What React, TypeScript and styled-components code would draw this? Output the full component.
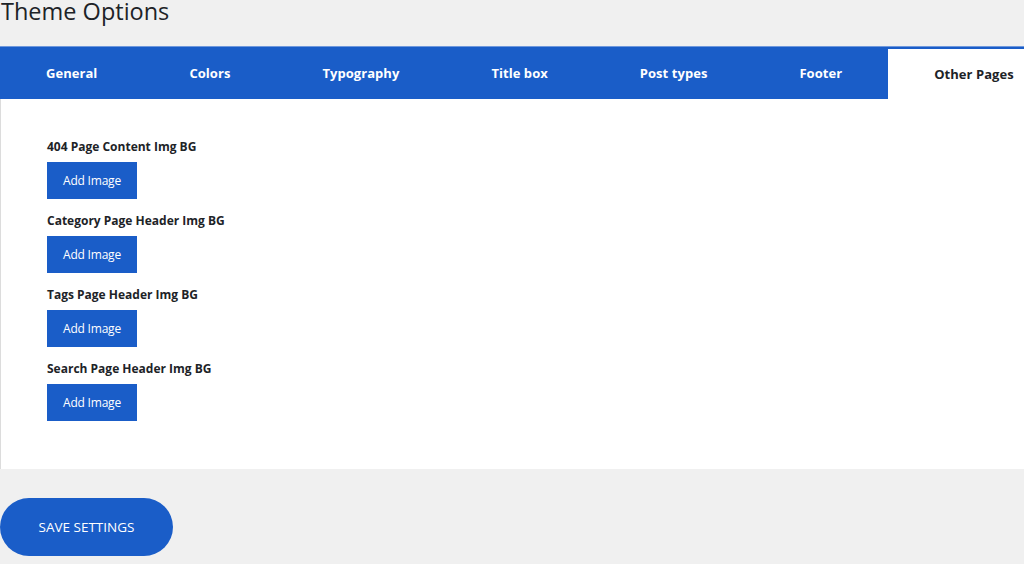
import styled, { createGlobalStyle } from 'styled-components';

const tabs = ['General', 'Colors', 'Typography', 'Title box', 'Post types', 'Footer', 'Other Pages'];
const fields = [
  '404 Page Content Img BG',
  'Category Page Header Img BG',
  'Tags Page Header Img BG',
  'Search Page Header Img BG',
];

export default function App() {
  return (
    <Page>
      <GlobalStyle />
      <Title>Theme Options</Title>

      <Panel>
        <TabBar>
          {tabs.map((tab) => (
            <Tab key={tab} $active={tab === 'Other Pages'}>
              {tab}
            </Tab>
          ))}
        </TabBar>

        <Content>
          {fields.map((field) => (
            <Field key={field}>
              <FieldLabel>{field}</FieldLabel>
              <AddButton type="button">Add Image</AddButton>
            </Field>
          ))}
        </Content>
      </Panel>

      <SaveButton type="button">Save Settings</SaveButton>
    </Page>
  );
}

/* ===== styles ===== */

const GlobalStyle = createGlobalStyle`
  html, body {
    margin: 0;
    padding: 0;
    background: #f0f0f0;
    overflow: hidden;
  }
  body {
    font-family: "Open Sans", "Noto Sans", sans-serif;
    color: #1d2327;
  }
`;

const Page = styled.div`
  width: 1024px;
  height: 564px;
  overflow: hidden;
`;

const Title = styled.h1`
  margin: 0;
  padding: 0 0 0 1px;
  height: 46px;
  font-size: 23.5px;
  font-weight: 400;
  line-height: 23px;
  color: #1d2327;
`;

const Panel = styled.section`
  background: #fff;
  border-left: 1px solid #dcdcdc;
  height: 423px;
`;

const TabBar = styled.nav`
  display: flex;
  align-items: flex-end;
  height: 53px;
  background: #1a5dc8;
  border-top: 1px solid #6f98dc;
  box-sizing: border-box;
  overflow: hidden;
  margin-left: -1px;
`;

const Tab = styled.div<{ $active?: boolean }>`
  flex: none;
  display: flex;
  align-items: center;
  height: ${(p) => (p.$active ? '50px' : '52px')};
  padding: ${(p) => (p.$active ? '0 46px 1px' : '0 46px 0')};
  font-size: 13px;
  font-weight: 700;
  letter-spacing: 0.05px;
  white-space: nowrap;
  color: ${(p) => (p.$active ? '#1d2327' : '#fff')};
  background: ${(p) => (p.$active ? '#fff' : 'transparent')};
  box-sizing: border-box;
`;

const Content = styled.div`
  display: flex;
  flex-direction: column;
  gap: 14px;
  padding: 40px 46px 0;
`;

const Field = styled.div`
  display: flex;
  flex-direction: column;
  align-items: flex-start;
  gap: 7px;
`;

const FieldLabel = styled.label`
  font-size: 12px;
  font-weight: 700;
  line-height: 16px;
  color: #1d2327;
`;

const AddButton = styled.button`
  width: 90px;
  height: 37px;
  border: none;
  border-radius: 0;
  background: #1a5dc8;
  color: #fff;
  font-family: "Open Sans", "Noto Sans", sans-serif;
  font-size: 12px;
  letter-spacing: -0.2px;
  cursor: pointer;
`;

const SaveButton = styled.button`
  display: block;
  margin-top: 29px;
  width: 173px;
  height: 58px;
  border: none;
  border-radius: 29px;
  background: #1a5dc8;
  color: #fff;
  font-family: "Open Sans", "Noto Sans", sans-serif;
  font-size: 13.5px;
  text-transform: uppercase;
  cursor: pointer;
`;
